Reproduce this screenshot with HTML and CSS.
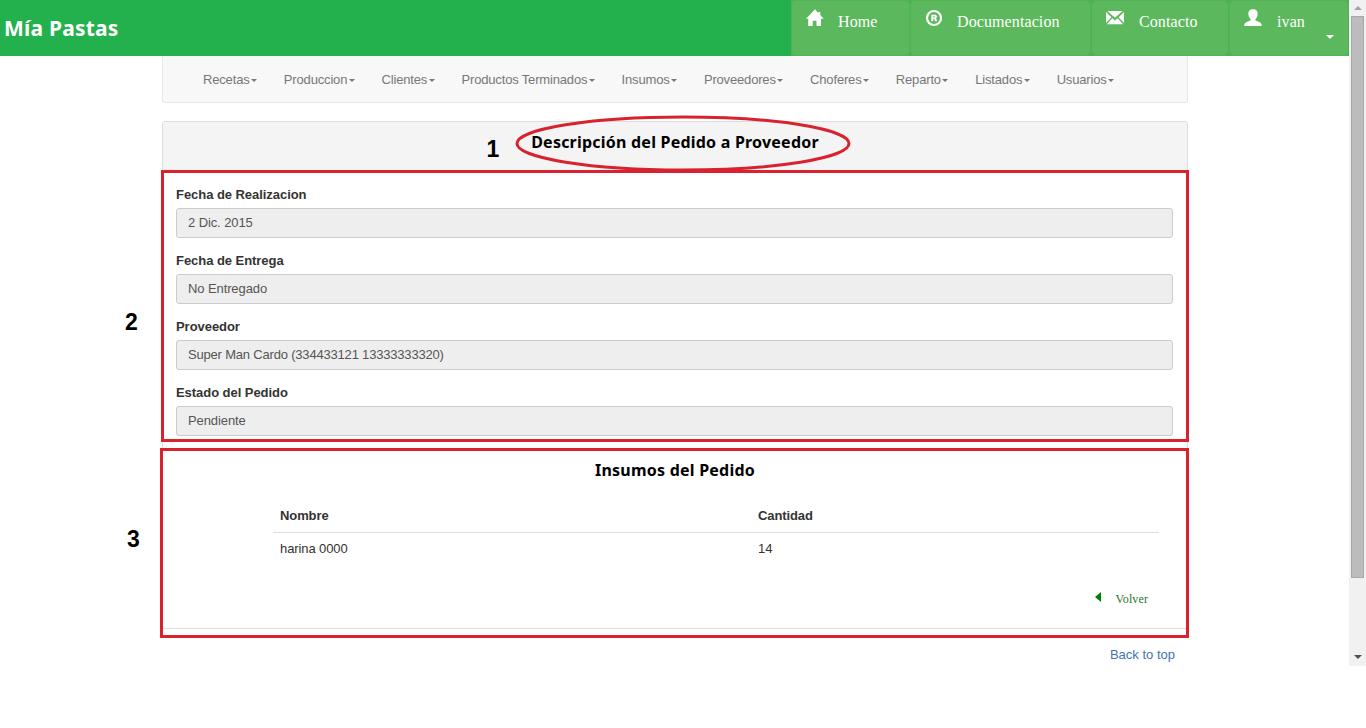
FILE: index.html
```html
<!DOCTYPE html>
<html lang="es">
<head>
<meta charset="utf-8">
<title>Mía Pastas</title>
<link rel="stylesheet" href="styles.css">
</head>
<body>
<div class="window">
  <div class="page">
    <header class="topbar">
      <div class="brand">Mía Pastas</div>
      <nav class="buttons">
        <a class="btn home"><svg class="icon" viewBox="0 0 18 18"><path d="M9 .3 0 9.700h2.200V17h4.500v-5.200h3.800V17h4.500V9.700h2.700L14.300 6V3h-2v1z"/></svg><span>Home</span></a>
        <a class="btn docs"><svg class="icon" viewBox="0 0 18 18"><circle cx="9" cy="9" r="7" fill="none" stroke="#fff" stroke-width="2.200"/><path fill-rule="evenodd" d="M6.300 5.800h3.400c2.600 0 2.800 2.600 1.400 3.400l1.100 3h-2l-.9-2.500h-1v2.500h-2zM8.300 7.200v1.200h1c.9 0 .9-1.200 0-1.200z"/></svg><span>Documentacion</span></a>
        <a class="btn contact"><svg class="icon" viewBox="0 0 18 18"><path d="M1.400 2h15.200L9 8.700zM0 2.900l5.400 5.300L0 14zM18 2.900l-5.400 5.300L18 14zM6.300 9.200 9 11.500l2.700-2.300 5.500 6.100H.8z"/></svg><span>Contacto</span></a>
        <a class="btn user"><svg class="icon" viewBox="0 0 18 18"><path d="M9 .2c3.200 0 4.800 2 4.700 4.600-.1 2-.9 4-2.200 5.200v1.600c1.800 1 5.900 1.700 6.200 4.200v1.100H.3v-1.100c.3-2.500 4.400-3.200 6.200-4.200V10C5.200 8.800 4.400 6.800 4.300 4.800 4.200 2.200 5.800.2 9 .2z"/></svg><span>ivan</span><i class="caret light"></i></a>
      </nav>
    </header>
    <main class="container">
      <nav class="menu">
        <a>Recetas<i class="caret"></i></a><a>Produccion<i class="caret"></i></a><a>Clientes<i class="caret"></i></a><a>Productos Terminados<i class="caret"></i></a><a>Insumos<i class="caret"></i></a><a>Proveedores<i class="caret"></i></a><a>Choferes<i class="caret"></i></a><a>Reparto<i class="caret"></i></a><a>Listados<i class="caret"></i></a><a>Usuarios<i class="caret"></i></a>
      </nav>
      <section class="panel">
        <h1 class="panel-title"><span>Descripción del Pedido a Proveedor</span></h1>
        <div class="fields">
          <div class="field"><div class="label">Fecha de Realizacion</div><div class="value">2 Dic. 2015</div></div>
          <div class="field"><div class="label">Fecha de Entrega</div><div class="value">No Entregado</div></div>
          <div class="field"><div class="label">Proveedor</div><div class="value long">Super Man Cardo (334433121 13333333320)</div></div>
          <div class="field"><div class="label">Estado del Pedido</div><div class="value">Pendiente</div></div>
        </div>
        <h2 class="subtitle">Insumos del Pedido</h2>
        <div class="table">
          <div class="row head"><div>Nombre</div><div>Cantidad</div></div>
          <div class="row"><div>harina 0000</div><div>14</div></div>
        </div>
        <div class="back"><svg viewBox="0 0 6 10"><path d="M6 0v10L0 5z"/></svg><span>Volver</span></div>
      </section>
      <div class="top-link"><a>Back to top</a></div>
    </main>
  </div>
  <div class="scrollbar"><i class="up"></i><div class="thumb"></div><i class="down"></i></div>
</div>
<svg class="notes" viewBox="0 0 1366 728">
  <g fill="none" stroke="#d8232f" stroke-width="3">
    <ellipse cx="683" cy="143.500" rx="166" ry="26.500"/>
    <rect x="162.500" y="171.500" width="1025" height="269"/>
    <rect x="161.500" y="449.500" width="1026" height="187"/>
  </g>
  <g class="numbers">
    <text x="486.500" y="157">1</text>
    <text x="125" y="330">2</text>
    <text x="127" y="547">3</text>
  </g>
</svg>
</body>
</html>
```
FILE: styles.css
```css
* { box-sizing: border-box; }
body { margin: 0; background: #fff; overflow: hidden; font: 13px/18px "Liberation Sans", Arial, sans-serif; color: #333; }
.window { display: flex; height: 666px; }
.page { width: 1349px; }
.topbar { display: flex; justify-content: space-between; height: 56px; background: #22b14c; }
.brand { padding: 13px 0 0 4px; font: bold 21px/30px "Noto Sans", sans-serif; letter-spacing: 0.2px; color: #fff; }
.buttons { display: flex; background: #4cb355; }
.btn { display: flex; align-items: flex-start; height: 56px; padding: 11px 0 0 14px; background: #5cb85c; border: 1px solid #50b457; border-radius: 5px; color: #fff; font: 16px/20px "Liberation Serif", serif; letter-spacing: 0.1px; }
.btn .icon { width: 18px; height: 18px; margin: -3px 14px 0 0; fill: #fff; }
.home { width: 119px; }
.docs { width: 181px; }
.contact { width: 138px; }
.contact .icon { margin-right: 15px; }
.user { width: 120px; }
.user .icon { margin-right: 15px; }
.caret { display: inline-block; border: 3px solid transparent; border-top-color: #777; border-bottom: 0; margin-left: 1.500px; vertical-align: 2px; }
.caret.light { border-width: 4px 4px 0; border-top-color: #fff; margin: 23px 0 0 21px; }
.container { width: 1026px; margin-left: 162px; }
.menu { display: flex; gap: 26.800px; height: 47px; padding: 15px 0 0 40px; background: #f8f8f8; border: 1px solid #e7e7e7; border-top: 0; border-radius: 0 0 3px 3px; color: #777; letter-spacing: -0.165px; white-space: nowrap; }
.panel { margin-top: 18px; height: 508px; border: 1px solid #ddd; border-radius: 3px; }
.panel-title { display: flex; justify-content: center; height: 49px; margin: 0; padding-top: 8px; background: #f4f4f4; color: #000; font: bold 16px/24px "Noto Sans", sans-serif; letter-spacing: 0.220px; }
.fields { display: flex; flex-direction: column; gap: 8px; padding: 15px 14px 0 13px; }
.label { height: 22px; font-weight: bold; letter-spacing: -0.050px; }
.field { height: 58px; }
.value { height: 30px; padding: 5px 11px; background: #eee; border: 1px solid #ccc; border-radius: 3px; color: #555; letter-spacing: -0.100px; }
.value.long { letter-spacing: -0.190px; }
.subtitle { margin: 16px 0 0; text-align: center; color: #000; font: bold 16px/24px "Noto Sans", sans-serif; letter-spacing: 0.220px; }
.table { width: 886px; margin: 18px 0 0 110px; }
.row { display: grid; grid-template-columns: 478px 1fr; height: 32px; padding: 7px 7px 0; letter-spacing: -0.100px; }
.row.head { height: 33px; font-weight: bold; padding-top: 7px; border-bottom: 1px solid #ddd; }
.back { display: flex; justify-content: flex-end; gap: 15px; margin: 25px 39px 0 0; color: #26772b; font: 12px/18px "Liberation Serif", serif; letter-spacing: 0.100px; }
.back svg { width: 6px; height: 10px; margin-top: 2px; fill: #008000; }
.top-link { margin-top: 17px; padding-right: 13px; text-align: right; color: #4274ae; }
.scrollbar { display: flex; flex-direction: column; align-items: center; width: 17px; height: 666px; background: #f1f1f1; }
.up { margin-top: 6px; border: 4px solid transparent; border-top: 0; border-bottom-color: #a3a3a3; }
.thumb { width: 13px; height: 562px; margin-top: 6px; background: #bcbcbc; border: 1px solid #a8a8a8; }
.down { margin-top: 77px; border: 4px solid transparent; border-bottom: 0; border-top-color: #505050; }
.notes { position: absolute; left: 0; top: 0; width: 1366px; height: 728px; pointer-events: none; }
.numbers { font: bold 23px "Liberation Sans", sans-serif; fill: #000; }
```
